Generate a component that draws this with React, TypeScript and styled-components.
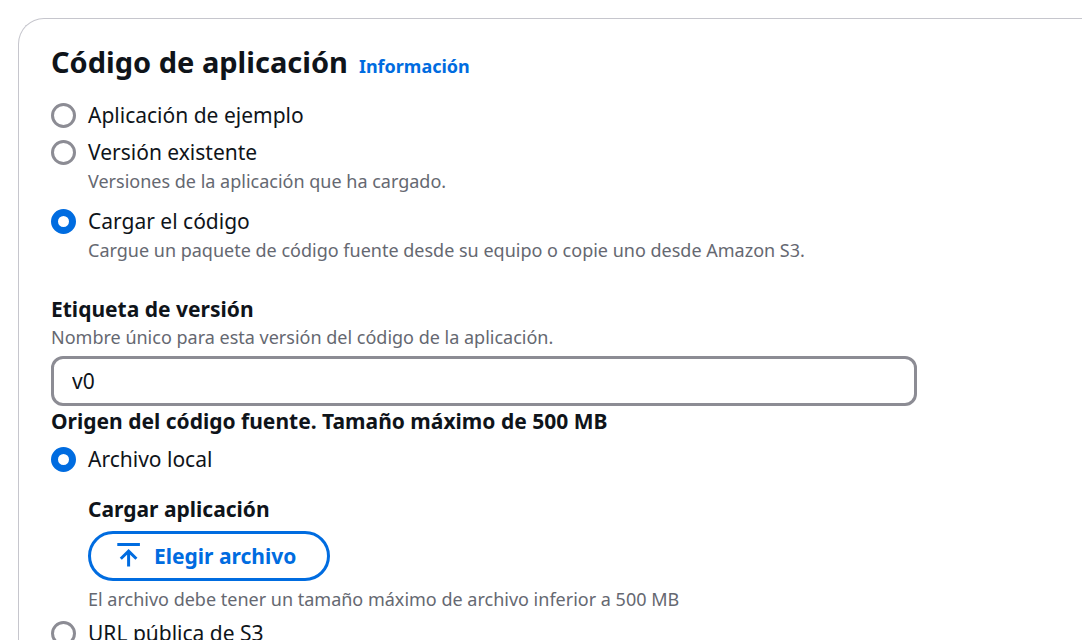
import React from "react";
import styled, { createGlobalStyle, css } from "styled-components";

const Global = createGlobalStyle`
  *, *::before, *::after { box-sizing: border-box; }
  html, body, #root { height: 100%; }
  body { margin: 0; overflow: hidden; background: #fff; color: #0f141a; font-family: "Noto Sans", "Open Sans", sans-serif; font-size: 21px; line-height: 32px; }
`;

const Page = styled.main`
  padding: 18px 0 0 18px;
  min-height: 100%;
`;
const Panel = styled.section`
  border: 1px solid #c6c6cd;
  border-right: 0;
  border-bottom: 0;
  border-top-left-radius: 26px;
  padding: 24px 32px;
`;
const Header = styled.header`
  display: flex;
  align-items: baseline;
  gap: 11px;
  margin-bottom: 18px;
`;
const Title = styled.h2`
  margin: 0;
  font-size: 29px;
  line-height: 38px;
  font-weight: 700;
`;
const InfoLink = styled.a`
  color: #006ce0;
  font-size: 18px;
  line-height: 26px;
  font-weight: 700;
  text-decoration: none;
`;
const Group = styled.fieldset`
  border: 0;
  margin: 0;
  padding: 0;
  min-width: 0;
`;
const heading = css`
  display: block;
  padding: 0;
  font-weight: 700;
  line-height: 30px;
`;
const Legend = styled.legend`
  ${heading}
  margin-bottom: 7px;
`;
const FieldLabel = styled.label`
  ${heading}
`;
const Option = styled.div<{ $gap?: number }>`
  display: grid;
  grid-template-columns: 25px 1fr;
  column-gap: 12px;
  align-items: center;
  margin-bottom: ${(p) => p.$gap ?? 0}px;
`;
const Radio = styled.input`
  appearance: none;
  margin: 0;
  width: 25px;
  height: 25px;
  border-radius: 50%;
  border: 3px solid #8c8c94;
  background: #fff;
  &:checked { border: 7px solid #006ce0; }
`;
const hint = css`
  margin: 0;
  color: #656871;
  font-size: 18px;
  line-height: 26px;
`;
const Hint = styled.p`
  ${hint}
`;
const OptionHint = styled.p`
  ${hint}
  grid-column: 2;
`;
const Label = styled.label`
  display: block;
`;
const Field = styled.div`
  margin-top: 31px;
`;
const TextInput = styled.input`
  display: block;
  width: calc(100% - 133px);
  height: 50px;
  margin-top: 6px;
  padding: 0 18px;
  border: 3px solid #8c8c94;
  border-radius: 12px;
  background: #fff;
  color: inherit;
  font: inherit;
`;
const Upload = styled.div`
  margin: 19px 0 5px 37px;
`;
const FileButton = styled.button`
  display: flex;
  align-items: center;
  gap: 11px;
  height: 50px;
  margin: 7px 0 5px;
  padding: 0 31px 0 26px;
  border: 3px solid #006ce0;
  border-radius: 25px;
  background: #fff;
  color: #006ce0;
  font: inherit;
  font-weight: 700;
`;

const UploadIcon = () => (
  <svg width="26" height="26" viewBox="0 0 26 26" fill="none" stroke="currentColor" strokeWidth="3" aria-hidden="true">
    <path d="M0.3 1.5h22.6M11.6 23.5V8.2M3.8 15.8l7.8-7.6 7.8 7.6" />
  </svg>
);

export default function App() {
  return (
    <>
      <Global />
      <Page>
        <Panel>
          <Header>
            <Title>Código de aplicación</Title>
            <InfoLink href="#info">Información</InfoLink>
          </Header>
          <Group aria-label="Código de aplicación">
            <Option $gap={5}>
              <Radio type="radio" name="code" id="sample" />
              <Label htmlFor="sample">Aplicación de ejemplo</Label>
            </Option>
            <Option $gap={11}>
              <Radio type="radio" name="code" id="existing" />
              <Label htmlFor="existing">Versión existente</Label>
              <OptionHint>Versiones de la aplicación que ha cargado.</OptionHint>
            </Option>
            <Option>
              <Radio type="radio" name="code" id="upload" defaultChecked />
              <Label htmlFor="upload">Cargar el código</Label>
              <OptionHint>Cargue un paquete de código fuente desde su equipo o copie uno desde Amazon S3.</OptionHint>
            </Option>
          </Group>
          <Field>
            <FieldLabel htmlFor="version">Etiqueta de versión</FieldLabel>
            <Hint>Nombre único para esta versión del código de la aplicación.</Hint>
            <TextInput id="version" type="text" defaultValue="v0" />
          </Field>
          <Group>
            <Legend>Origen del código fuente. Tamaño máximo de 500 MB</Legend>
            <Option>
              <Radio type="radio" name="source" id="local" defaultChecked />
              <Label htmlFor="local">Archivo local</Label>
            </Option>
            <Upload>
              <FieldLabel htmlFor="file">Cargar aplicación</FieldLabel>
              <FileButton type="button" id="file">
                <UploadIcon />
                Elegir archivo
              </FileButton>
              <Hint>El archivo debe tener un tamaño máximo de archivo inferior a 500 MB</Hint>
            </Upload>
            <Option>
              <Radio type="radio" name="source" id="s3" />
              <Label htmlFor="s3">URL pública de S3</Label>
            </Option>
          </Group>
        </Panel>
      </Page>
    </>
  );
}
